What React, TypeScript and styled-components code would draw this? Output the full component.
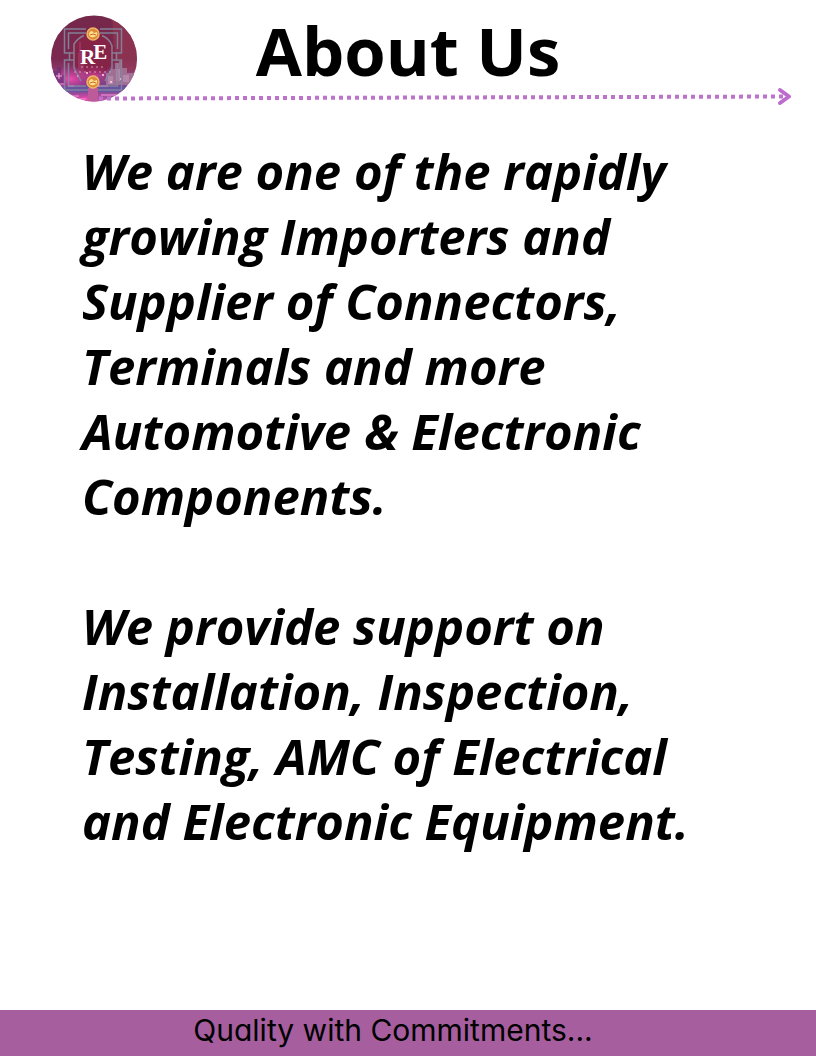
import React from "react";
import styled, { createGlobalStyle } from "styled-components";

const GlobalStyle = createGlobalStyle`
  * { box-sizing: border-box; }
  body { margin: 0; background: #fff; color: #000; }
`;

const Page = styled.div`
  min-height: 100vh;
  display: flex;
  flex-direction: column;
  font-family: "Open Sans", "Noto Sans", sans-serif;
`;

const Header = styled.header`
  position: relative;
  height: 112px;
  padding: 2px 0 0;
`;

const Title = styled.h1`
  margin: 0;
  font-size: 67px;
  line-height: 96px;
  font-weight: 700;
  text-align: center;
`;

const Logo = styled.svg`
  position: absolute;
  left: 50px;
  top: 15px;
  width: 88px;
  height: 88px;
`;

const Arrow = styled.svg`
  position: absolute;
  left: 60px;
  top: 86px;
  width: calc(100% - 84px);
  height: 20px;
`;

const Body = styled.main`
  flex: 1;
  padding: 27px 80px 64px 82px;
`;

const Paragraph = styled.p`
  margin: 0 0 65px;
  font-size: 49px;
  line-height: 65px;
  font-weight: 700;
  font-style: italic;
`;

const Footer = styled.footer`
  height: 46px;
  padding-right: 30px;
  background: #a65e9f;
  font-family: Inter, sans-serif;
  font-size: 30px;
  line-height: 40px;
  font-feature-settings: "cv11";
  text-align: center;
`;

const company = [
  "We are one of the rapidly",
  "growing Importers and",
  "Supplier of Connectors,",
  "Terminals and more",
  "Automotive & Electronic",
  "Components.",
];

const services = [
  "We provide support on",
  "Installation, Inspection,",
  "Testing, AMC of Electrical",
  "and Electronic Equipment.",
];

function Lines({ items }: { items: string[] }) {
  return (
    <Paragraph>
      {items.map((line, i) => (
        <React.Fragment key={line}>
          {i > 0 && <br />}
          {line}
        </React.Fragment>
      ))}
    </Paragraph>
  );
}

function Emblem({ y }: { y: number }) {
  return (
    <g transform={`translate(43 ${y})`}>
      <circle r="6" fill="#dd8a3a" stroke="#efb566" strokeWidth="1.5" />
      <path d="M-4 1q0-4 3-4l2 2 3-1q1 4-3 5t-5-2z" fill="#ffe08c" />
      <path d="M-3 1l3-1 3 1" fill="none" stroke="#c9652b" strokeWidth="1" />
    </g>
  );
}

function LogoMark() {
  return (
    <Logo viewBox="0 0 88 88" role="img" aria-label="RE">
      <defs>
        <linearGradient id="sky" x1="0" y1="0" x2="0" y2="1">
          <stop offset="0" stopColor="#74284a" />
          <stop offset=".5" stopColor="#7b2850" />
          <stop offset=".68" stopColor="#93407a" />
          <stop offset=".84" stopColor="#7a4496" />
          <stop offset="1" stopColor="#c468a8" />
        </linearGradient>
        <radialGradient id="glow">
          <stop offset="0" stopColor="#f04db0" />
          <stop offset="1" stopColor="#b52d90" stopOpacity="0" />
        </radialGradient>
        <clipPath id="disc"><circle cx="44" cy="43.5" r="43" /></clipPath>
      </defs>
      <g clipPath="url(#disc)">
        <path d="M0 0h88v88H0z" fill="url(#sky)" />
        <path d="M62 0h26v56H65z" fill="#963951" opacity=".6" />
        <circle cx="43" cy="38" r="22" fill="#872549" />
        <ellipse cx="20" cy="64" rx="24" ry="13" fill="url(#glow)" />
        <ellipse cx="44" cy="60" rx="16" ry="10" fill="url(#glow)" opacity=".6" />
        <ellipse cx="36" cy="84" rx="24" ry="8" fill="url(#glow)" />
        <path d="M56 70V58h5v-4h4v-6h4v-2h3v7h5v5h7v12z" fill="#a9849f" opacity=".7" />
        <path d="M58 61h5v8h-5zM66 54h4v12h-4zM73 60h6v7h-6z" fill="#bd93b3" opacity=".7" />
        <path d="M0 56h7v-4h4v8h4v10H0z" fill="#5f2f76" opacity=".6" />
        <path d="M28 63V38h1V27h2v11h3v25z" fill="#b24a83" opacity=".4" />
        <path d="M10 71h68v6H10z" fill="#645aa3" opacity=".8" />
        <path d="M5 69h9m4 2h6m24 0h10M12 81h17m22-1h16M24 84h12" stroke="#f08bd0" strokeWidth="2" opacity=".6" />
        <path d="M9 58v6M6 61h6" stroke="#ffb3e2" strokeWidth="1" />
        <path d="M27 61h2m7-3h2m14 2h2m6 7h2m8-3h2" stroke="#ffd4e9" strokeWidth="2" opacity=".8" />
        <g fill="none" stroke="#84889f" strokeWidth="1.5" opacity=".9">
          <path d="M36 14H14.500v24h5v7h-5v30h57V45h-5v-7h5V14H50" />
          <path d="M36 18H18.500v16M50 18h17.500v16M18.500 48v23H36M67.500 48v23H50" />
          <path d="M34 20.500Q28 23 24 29v9h-5M52 20.500Q60 24 62 31v7h5M24 38v7h-5M62 38v7h5M24 45v8l7 13M62 45v8l-7 13" />
        </g>
        <path d="M38 73h10v14H38z" fill="#bd5a9a" />
        <Emblem y={19} />
        <Emblem y={67} />
        <text x="30" y="49" fill="#fff" fontFamily="Liberation Serif, serif" fontWeight="700" fontSize="21">
          R<tspan dy="-5" dx="-2">E</tspan>
        </text>
        <path d="M31 52h24M24 57h38" stroke="#d7a5c0" strokeWidth="1.5" strokeDasharray="2 3" opacity=".6" />
      </g>
    </Logo>
  );
}

export default function App() {
  return (
    <Page>
      <GlobalStyle />
      <Header>
        <Title>About Us</Title>
        <LogoMark />
        <Arrow aria-hidden="true">
          <line x1="39" y1="12.500" x2="99%" y2="10.500" stroke="#bd72cb" strokeWidth="4" strokeDasharray="4 4" />
          <svg x="100%" overflow="visible">
            <path d="M-12 4l9 6.500-9 6.500" fill="none" stroke="#be6bd0" strokeWidth="4" strokeLinecap="round" strokeLinejoin="round" />
          </svg>
        </Arrow>
      </Header>
      <Body>
        <Lines items={company} />
        <Lines items={services} />
      </Body>
      <Footer>Quality with Commitments...</Footer>
    </Page>
  );
}
